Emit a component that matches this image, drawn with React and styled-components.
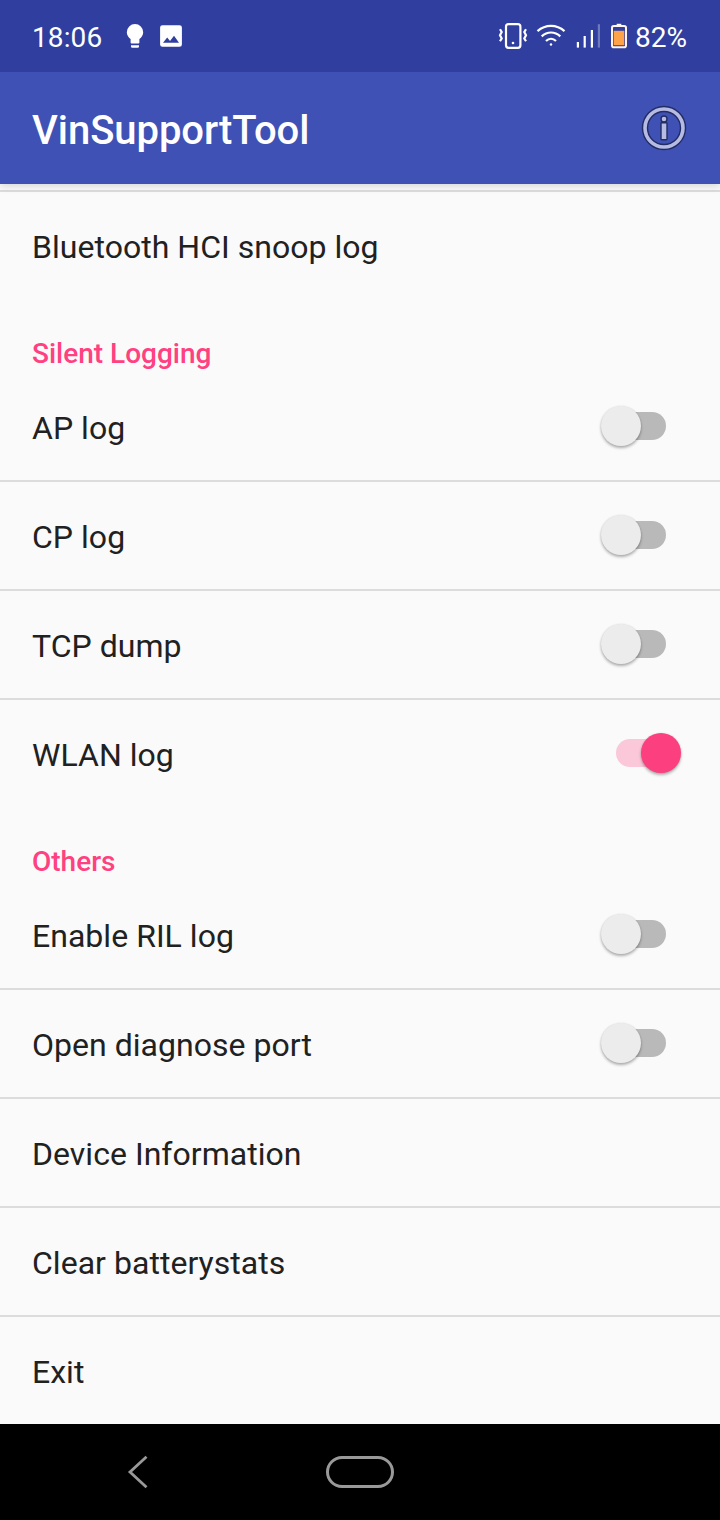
import React, { useState } from 'react'
import styled, { createGlobalStyle } from 'styled-components'

const sections = [
    {
        items: [{ id: 'hci', label: 'Bluetooth HCI snoop log' }],
    },
    {
        title: 'Silent Logging',
        items: [
            { id: 'ap', label: 'AP log', toggle: true },
            { id: 'cp', label: 'CP log', toggle: true },
            { id: 'tcp', label: 'TCP dump', toggle: true },
            { id: 'wlan', label: 'WLAN log', toggle: true },
        ],
    },
    {
        title: 'Others',
        items: [
            { id: 'ril', label: 'Enable RIL log', toggle: true },
            { id: 'diag', label: 'Open diagnose port', toggle: true },
            { id: 'device', label: 'Device Information' },
            { id: 'battery', label: 'Clear batterystats' },
            { id: 'exit', label: 'Exit' },
        ],
    },
]

function StatusIcons() {
    return (
        <svg width="130" height="32" viewBox="498 20 130 32" fill="none">
            {/* vibrate */}
            <g stroke="#fff" strokeWidth="2.2">
                <rect x="506" y="24.2" width="14.4" height="23.6" rx="2.5" />
                <path d="M500 29.2l1.700 2.800-1.700 3.300 1.700 3.200-1.700 2.800M526 29.200l-1.700 2.800 1.700 3.300-1.700 3.200 1.700 2.800" />
            </g>
            <circle cx="513" cy="43" r="1.3" fill="#fff" />
            {/* wifi */}
            <g stroke="#fff" strokeWidth="2.2">
                <path d="M537.5 31.2C545.5 24.2 556.5 24.2 564.5 31.2" />
                <path d="M541.7 36.4C547.2 31.2 554.8 31.2 560.3 36.4" />
                <path d="M546 41C549 38 553 38 556 41" />
            </g>
            <circle cx="551" cy="44.5" r="1.2" fill="#fff" />
            {/* signal */}
            <g fill="#fff">
                <rect x="576.8" y="42" width="2.2" height="5.6" />
                <rect x="583.6" y="36" width="2.2" height="11.6" />
                <rect x="590.8" y="30" width="2.2" height="17.6" />
                <rect x="597.8" y="24.2" width="2.2" height="23.4" opacity="0.3" />
            </g>
            {/* battery */}
            <rect x="616.7" y="23.8" width="4.6" height="2" fill="#fff" />
            <rect x="612" y="26" width="14" height="21.2" rx="1.8" stroke="#fff3ea" strokeWidth="2" />
            <rect x="613.7" y="30.8" width="10.6" height="14.4" fill="#ffa34b" />
        </svg>
    )
}

function App() {
    const [enabled, setEnabled] = useState({ wlan: true })

    const toggle = (id) => {
        setEnabled({ ...enabled, [id]: !enabled[id] })
    }

    return (
        <Screen>
            <GlobalStyle />
            <StatusBar>
                <StatusText>18:06</StatusText>
                <Notifications>
                    <svg width="60" height="28" viewBox="124 22 60 28" fill="#fff">
                        <path d="M135 24a8.2 8.2 0 0 0-8.2 8.2c0 2.9 1.6 5.2 3.8 6.7v3.7a1 1 0 0 0 1 1h6.8a1 1 0 0 0 1-1v-3.7c2.2-1.5 3.8-3.8 3.8-6.7A8.2 8.2 0 0 0 135 24z" />
                        <path d="M131 45.2h8v1.3a1.300 1.300 0 0 1-1.300 1.300h-5.400a1.300 1.300 0 0 1-1.300-1.300z" />
                        <path
                            fillRule="evenodd"
                            d="M162.5 25.2h17a2.4 2.4 0 0 1 2.4 2.4v16.8a2.4 2.4 0 0 1-2.4 2.4h-17a2.4 2.4 0 0 1-2.4-2.4V27.6a2.4 2.4 0 0 1 2.4-2.4zM163 42.800h16l-5-7-4 5.200-2.800-3.400z"
                        />
                    </svg>
                </Notifications>
                <StatusIcons />
                <BatteryText>82%</BatteryText>
            </StatusBar>

            <AppBar>
                <Title>VinSupportTool</Title>
                <InfoButton aria-label="Info">
                    <svg width="48" height="48" viewBox="-24 -24 48 48" fill="none">
                        <circle r="19" stroke="#232c62" strokeWidth="6.4" />
                        <circle r="19" stroke="#b5bbe3" strokeWidth="3.6" />
                        <g fill="#b5bbe3" stroke="#232c62" strokeWidth="1.4">
                            <circle cy="-9" r="3" />
                            <rect x="-3" y="-5.3" width="6" height="17" rx="0.6" />
                        </g>
                    </svg>
                </InfoButton>
            </AppBar>

            <List>
                {sections.map((section, i) => (
                    <section key={i}>
                        {section.title && <SectionTitle>{section.title}</SectionTitle>}
                        {section.items.map((item) => (
                            <Row key={item.id}>
                                <Label>{item.label}</Label>
                                {item.toggle && (
                                    <Switch
                                        role="switch"
                                        aria-label={item.label}
                                        aria-checked={!!enabled[item.id]}
                                        $on={enabled[item.id]}
                                        onClick={() => toggle(item.id)}
                                    >
                                        <Track $on={enabled[item.id]}>
                                            <Thumb $on={enabled[item.id]} />
                                        </Track>
                                    </Switch>
                                )}
                            </Row>
                        ))}
                    </section>
                ))}
            </List>

            <NavBar>
                <NavButton aria-label="Back">
                    <svg width="24" height="36" viewBox="0 0 24 36" fill="none">
                        <path d="M20.5 2.8L4 18l16.5 15.2" stroke="#999" strokeWidth="2.8" />
                    </svg>
                </NavButton>
                <NavButton aria-label="Home">
                    <HomePill />
                </NavButton>
            </NavBar>
        </Screen>
    )
}

export default App


const GlobalStyle = createGlobalStyle`
    body {
        margin: 0;
        background: #fafafa;
        font-family: Roboto, sans-serif;
    }

    svg {
        display: block;
        flex-shrink: 0;
    }

    button {
        padding: 0;
        border: none;
        background: none;
        cursor: pointer;
    }
`
const Screen = styled.div`
    display: flex;
    flex-direction: column;
    width: 720px;
    height: 1520px;
    overflow: hidden;
    background: #fafafa;
`
const StatusBar = styled.div`
    display: flex;
    align-items: center;
    height: 72px;
    padding: 0 33px 0 32px;
    box-sizing: border-box;
    background: #303f9f;
    color: #fff;
    z-index: 2;
`
const StatusText = styled.span`
    width: 92px;
    padding-top: 4px;
    font-size: 28px;
    line-height: 34px;
    letter-spacing: 0.1px;
`
const BatteryText = styled(StatusText)`
    width: auto;
    margin-left: 7px;
    letter-spacing: 0;
`
const Notifications = styled.div`
    flex: 1;
`
const AppBar = styled.header`
    display: flex;
    align-items: center;
    justify-content: space-between;
    height: 112px;
    padding: 0 32px;
    box-sizing: border-box;
    background: #3f51b5;
    box-shadow: 0 2px 8px rgba(0, 0, 0, 0.15);
    z-index: 1;
`
const Title = styled.h1`
    margin: 0;
    padding-top: 6px;
    font-size: 40px;
    line-height: 48px;
    font-weight: 500;
    letter-spacing: -0.05px;
    color: #fff;
`
const InfoButton = styled.button`
    margin-right: -32px;
    padding-right: 32px !important;
`
const List = styled.main`
    flex: 1;
    padding-top: 6px;

    section:first-child {
        border-top: 2px solid #dcdcdc;
    }
`
const SectionTitle = styled.h2`
    height: 74px;
    margin: 0;
    padding: 38px 32px 0;
    box-sizing: border-box;
    font-size: 28px;
    line-height: 34px;
    font-weight: 500;
    color: #ff4081;
`
const Row = styled.div`
    display: flex;
    align-items: center;
    justify-content: space-between;
    height: 107px;
    padding: 0 39px 0 32px;

    & + & {
        border-top: 2px solid #dcdcdc;
    }
`
const Label = styled.span`
    padding-top: 3px;
    font-size: 32px;
    line-height: 38px;
    letter-spacing: 0.03px;
    color: #212121;
`
const Switch = styled.button`
    display: flex;
    width: 80px;
    height: 40px;
    margin-bottom: 1px;
    align-items: center;
    padding-left: ${(props) => (props.$on ? '15px' : '5px')} !important;
`
const Track = styled.span`
    display: flex;
    align-items: center;
    justify-content: ${(props) => (props.$on ? 'flex-end' : 'flex-start')};
    width: 60px;
    height: 28px;
    border-radius: 14px;
    background: ${(props) => (props.$on ? '#fbc8d9' : '#b9b9b9')};
`
const Thumb = styled.span`
    flex-shrink: 0;
    width: 40px;
    height: 40px;
    margin: 0 -5px;
    border-radius: 50%;
    background: ${(props) => (props.$on ? '#fb3f7f' : '#ececec')};
    box-shadow: 0 2px 3px rgba(0, 0, 0, 0.3), 0 0 2px rgba(0, 0, 0, 0.1);
`
const NavBar = styled.nav`
    display: grid;
    grid-template-columns: 276px 168px 276px;
    align-items: center;
    justify-items: center;
    height: 96px;
    background: #000;
`
const NavButton = styled.button`
    display: flex;
`
const HomePill = styled.span`
    width: 68px;
    height: 32px;
    box-sizing: border-box;
    border: 3px solid #999;
    border-radius: 16px;
`
